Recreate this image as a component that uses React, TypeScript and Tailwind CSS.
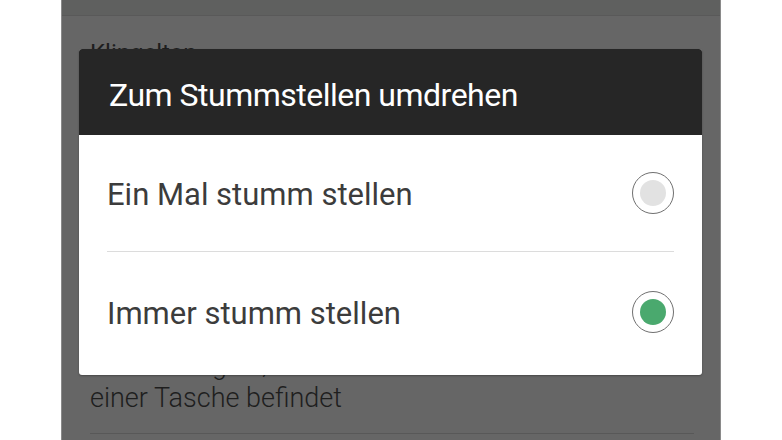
import React from "react";

function Radio({ checked }: { checked: boolean }) {
  return (
    <div className="w-[42px] h-[42px] rounded-full border-[1.5px] border-[#707070] flex items-center justify-center shrink-0">
      <div
        className={`w-[26px] h-[26px] rounded-full ${
          checked ? "bg-[#4aa96e]" : "bg-[#e2e2e2]"
        }`}
      />
    </div>
  );
}

export default function App() {
  const options = [
    { label: "Ein Mal stumm stellen", checked: false },
    { label: "Immer stumm stellen", checked: true },
  ];

  return (
    <div
      className="w-[782px] h-[440px] bg-white flex overflow-hidden"
      style={{ fontFamily: "Roboto, 'Liberation Sans', sans-serif" }}
    >
      <div className="w-[61px] shrink-0" />
      <div className="relative w-[660px] h-full bg-[#666666] border-x border-[#8a8a8a] shrink-0">
        {/* settings list behind the dim */}
        <div className="h-[16px] bg-[#5f605f] border-b border-[#595959]" />
        <div className="pl-[28px] pr-[26px]">
          <div className="pt-[22px] text-[24px] leading-[30px] text-[#1e1e1e]">
            Klingelton
          </div>
          <div className="h-[281px]" />
          <div className="text-[27px] leading-[33px] font-light text-[#1e1e1e] whitespace-nowrap">
            Lauter klingeln, wenn sich das Telefon in
            <br />
            einer Tasche befindet
          </div>
          <div className="mt-[18px] h-px bg-[#585858]" />
        </div>

        {/* dialog */}
        <div className="absolute left-[17px] top-[49px] w-[623px] rounded-[3px] overflow-hidden bg-white pb-[3px] shadow-[0_1px_2px_rgba(0,0,0,0.3)]">
          <div className="h-[86px] bg-[#262626] pl-[30px] pt-[5px] flex items-center">
            <span className="text-[32px] text-white tracking-[-0.5px]">
              Zum Stummstellen umdrehen
            </span>
          </div>
          <div className="px-[28px]">
            {options.map((o, i) => (
              <div
                key={o.label}
                className={`flex items-center justify-between ${
                  i === 0 ? "h-[117px] border-b border-[#dcdcdc]" : "h-[120px]"
                }`}
              >
                <span className="pt-[4px] text-[31px] text-[#3c3c3c]">{o.label}</span>
                <Radio checked={o.checked} />
              </div>
            ))}
          </div>
        </div>
      </div>
      <div className="flex-1" />
    </div>
  );
}
